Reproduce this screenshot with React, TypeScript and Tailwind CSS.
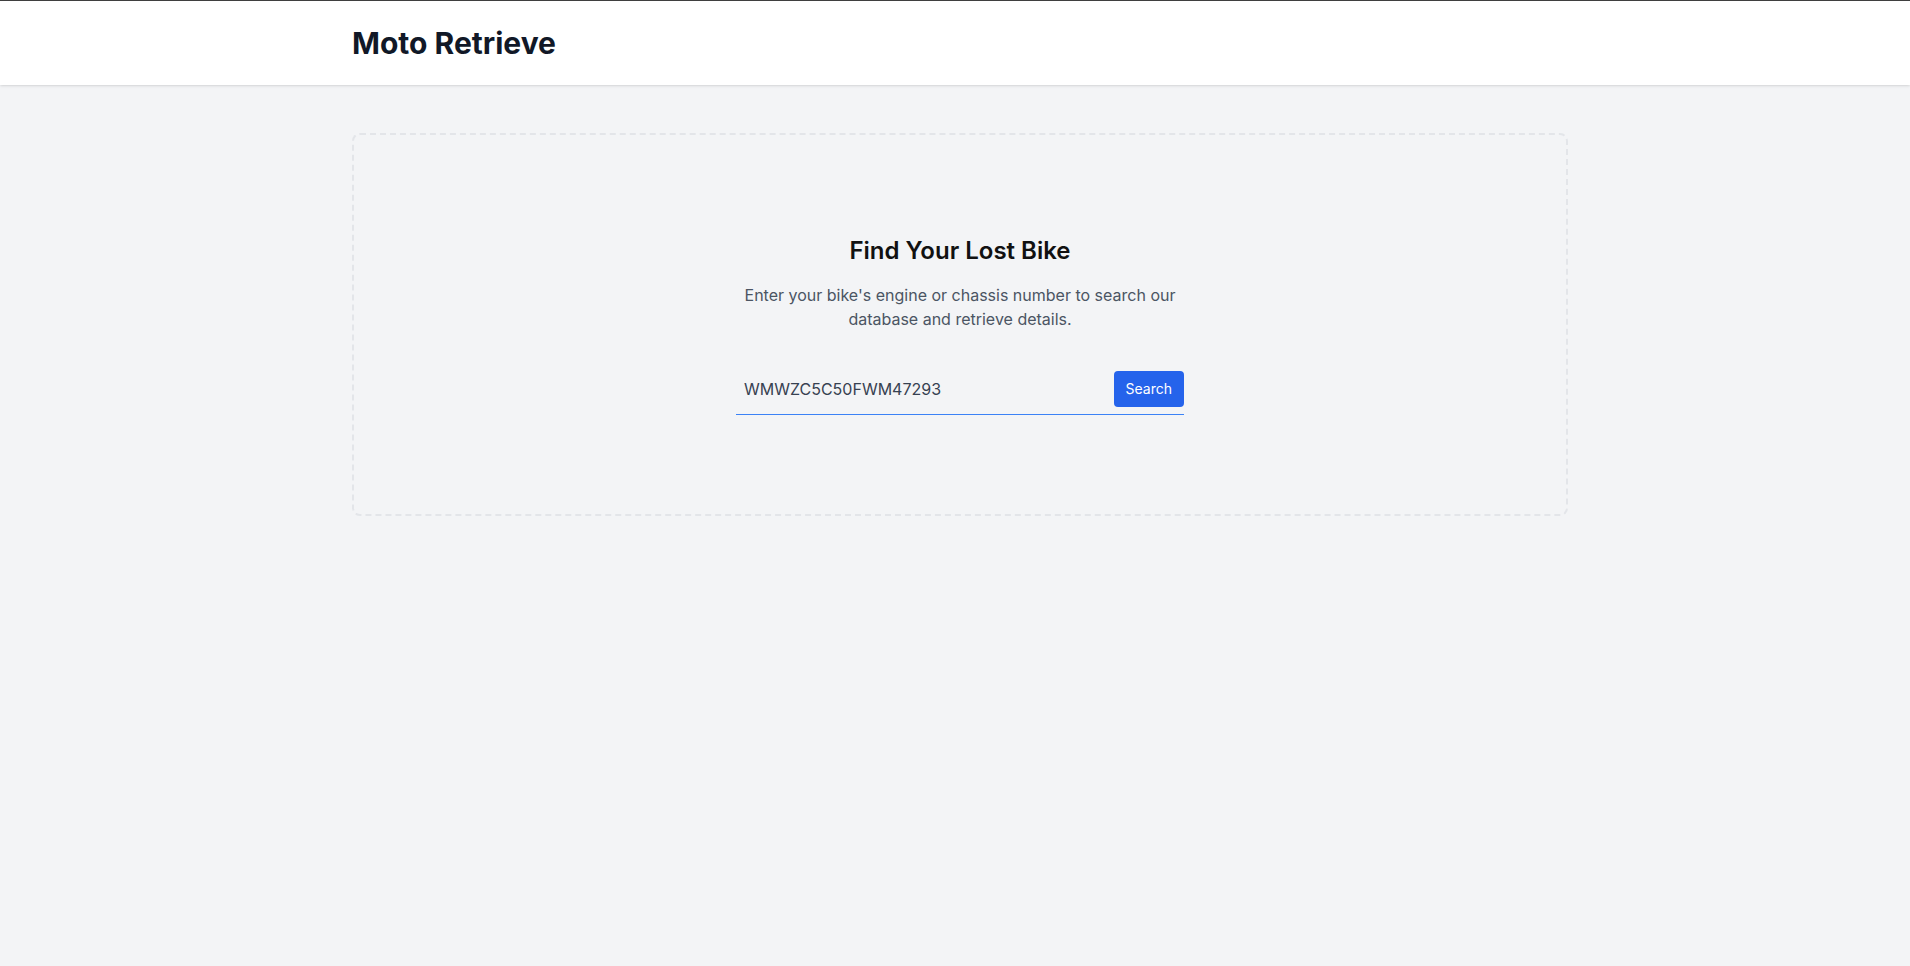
import { useState } from "react";

export default function App() {
  const [query, setQuery] = useState("WMWZC5C50FWM47293");

  return (
    <div className="min-h-screen bg-[#f3f4f6] font-['Inter',sans-serif]">
      <header className="border-t border-[#3f3f3f] bg-white shadow">
        <div className="mx-auto max-w-[1226px] pl-[10px] py-6">
          <h1 className="text-3xl font-bold text-[#111827]">Moto Retrieve</h1>
        </div>
      </header>

      <main className="mx-auto max-w-[1226px] pl-[10px] pt-12">
        <div className="rounded-lg border-2 border-dashed border-[#e3e5e9] px-6 pt-[100px] pb-[99px]">
          <div className="mx-auto flex max-w-md flex-col items-center text-center">
            <h2 className="text-2xl font-semibold text-[#111111]">
              Find Your Lost Bike
            </h2>
            <p className="mt-4 text-base leading-6 text-[#4b5563]">
              Enter your bike's engine or chassis number to search our database
              and retrieve details.
            </p>

            <form
              className="mt-[33px] flex h-[51px] w-full items-center border-b border-[#3b82f6]"
              onSubmit={(e) => e.preventDefault()}
            >
              <input
                type="text"
                value={query}
                onChange={(e) => setQuery(e.target.value)}
                placeholder="Engine or chassis number"
                className="min-w-0 flex-1 bg-transparent px-2 text-base leading-6 text-[#374151] outline-none"
              />
              <button
                type="submit"
                className="rounded bg-[#2563eb] px-3 py-2 text-sm leading-5 text-white"
              >
                Search
              </button>
            </form>
          </div>
        </div>
      </main>
    </div>
  );
}
